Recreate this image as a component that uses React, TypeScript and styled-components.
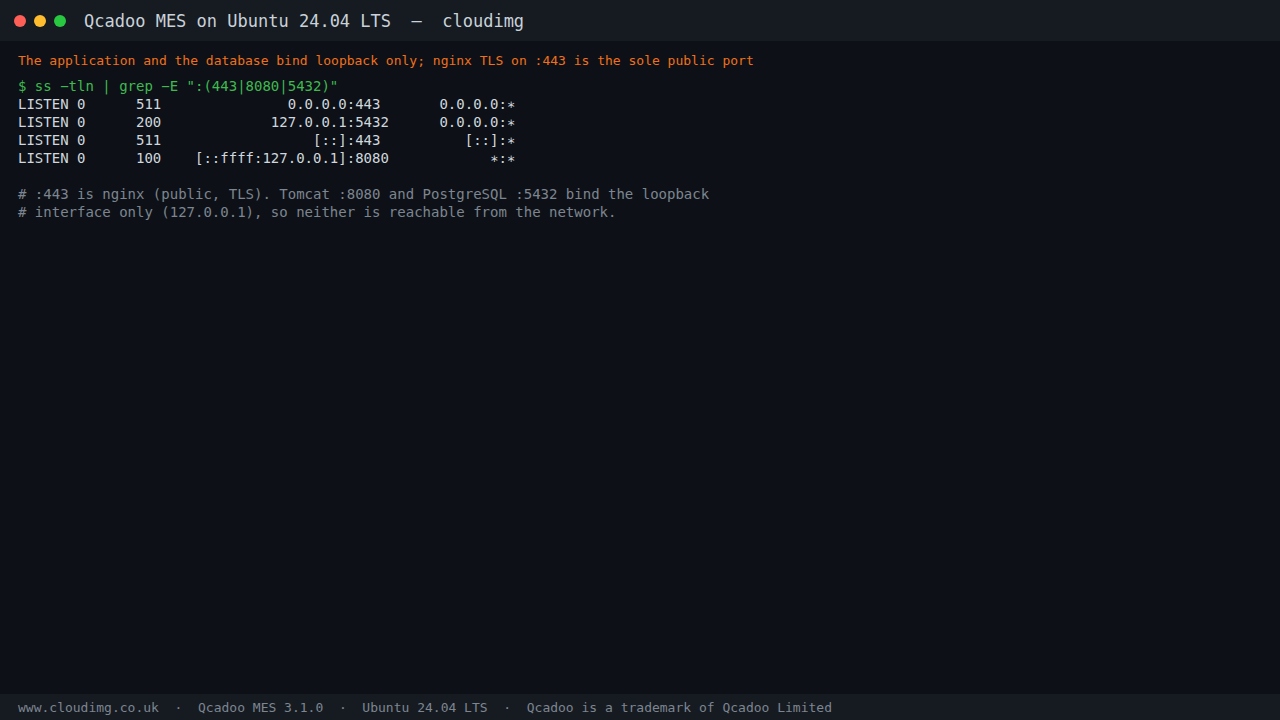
import React from "react";
import styled, { createGlobalStyle } from "styled-components";

const Global = createGlobalStyle`
  html, body { margin: 0; padding: 0; background: #0d1117; }
  body { font-family: "DejaVu Sans Mono", "Liberation Mono", monospace; }
`;

const Frame = styled.div`
  width: 1280px;
  height: 720px;
  display: flex;
  flex-direction: column;
  background: #0d1117;
  overflow: hidden;
`;

const TitleBar = styled.div`
  height: 41px;
  flex: none;
  display: flex;
  align-items: center;
  padding-left: 14px;
  background: #161b22;
`;

const Dots = styled.div`
  display: flex;
  gap: 8px;
  margin-right: 18px;
`;

const Dot = styled.span<{ $c: string }>`
  width: 12px;
  height: 12px;
  border-radius: 50%;
  background: ${(p) => p.$c};
`;

const Title = styled.div`
  font-size: 17px;
  color: #c9d1d9;
  white-space: pre;
  margin-top: 1px;
`;

const Body = styled.div`
  flex: 1;
  padding: 11px 18px 0;
`;

const Note = styled.div`
  font-size: 13px;
  line-height: 18px;
  color: #f0701a;
  white-space: pre;
  margin-bottom: 7px;
`;

const Pre = styled.pre`
  margin: 0;
  font-family: inherit;
  font-size: 14px;
  line-height: 18px;
  color: #d0d7de;
`;

const Cmd = styled.span`
  color: #3fb950;
`;

const Comment = styled.span`
  color: #7d8590;
`;

const Footer = styled.div`
  height: 26px;
  flex: none;
  display: flex;
  align-items: center;
  padding-left: 18px;
  background: #161b22;
  font-size: 13px;
  color: #7d8590;
  white-space: pre;
`;

const rows = [
  "LISTEN 0      511               0.0.0.0:443       0.0.0.0:\u2217",
  "LISTEN 0      200             127.0.0.1:5432      0.0.0.0:\u2217",
  "LISTEN 0      511                  [::]:443          [::]:\u2217",
  "LISTEN 0      100    [::ffff:127.0.0.1]:8080            \u2217:\u2217",
];

export default function App() {
  return (
    <>
      <Global />
      <Frame>
        <TitleBar>
          <Dots>
            <Dot $c="#ff5f57" />
            <Dot $c="#febc2e" />
            <Dot $c="#28c840" />
          </Dots>
          <Title>{"Qcadoo MES on Ubuntu 24.04 LTS  \u2013  cloudimg"}</Title>
        </TitleBar>
        <Body>
          <Note>
            The application and the database bind loopback only; nginx TLS on :443 is the sole public port
          </Note>
          <Pre>
            <Cmd>{'$ ss \u2212tln | grep \u2212E ":(443|8080|5432)"'}</Cmd>
            {"\n" + rows.join("\n") + "\n\n"}
            <Comment>
              {"# :443 is nginx (public, TLS). Tomcat :8080 and PostgreSQL :5432 bind the loopback\n# interface only (127.0.0.1), so neither is reachable from the network."}
            </Comment>
          </Pre>
        </Body>
        <Footer>
          {"www.cloudimg.co.uk  \u00b7  Qcadoo MES 3.1.0  \u00b7  Ubuntu 24.04 LTS  \u00b7  Qcadoo is a trademark of Qcadoo Limited"}
        </Footer>
      </Frame>
    </>
  );
}
